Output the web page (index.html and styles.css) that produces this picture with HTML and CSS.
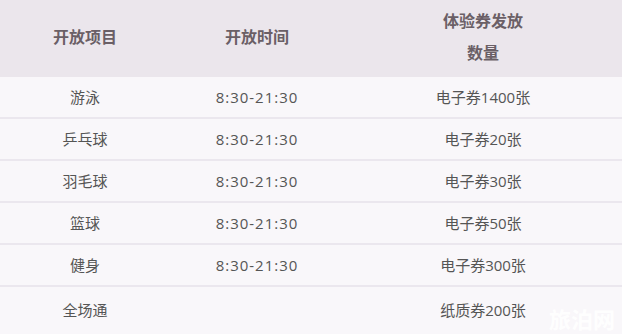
FILE: index.html
```html
<!DOCTYPE html>
<html lang="zh">
<head>
<meta charset="utf-8">
<link rel="stylesheet" href="styles.css">
</head>
<body>
<div class="wrap">
<table class="tbl">
  <colgroup><col class="c1"><col class="c2"><col class="c3"></colgroup>
  <thead>
    <tr><th>开放项目</th><th>开放时间</th><th>体验券发放<br>数量</th></tr>
  </thead>
  <tbody>
    <tr><td>游泳</td><td class="num">8:30-21:30</td><td>电子券1400张</td></tr>
    <tr><td>乒乓球</td><td class="num">8:30-21:30</td><td>电子券20张</td></tr>
    <tr><td>羽毛球</td><td class="num">8:30-21:30</td><td>电子券30张</td></tr>
    <tr><td>篮球</td><td class="num">8:30-21:30</td><td>电子券50张</td></tr>
    <tr><td>健身</td><td class="num">8:30-21:30</td><td>电子券300张</td></tr>
    <tr class="last"><td>全场通</td><td class="num"></td><td>纸质券200张</td></tr>
  </tbody>
</table>
<div class="mark">旅泊网</div>
</div>
</body>
</html>
```
FILE: styles.css
```css
html, body { margin: 0; padding: 0; }
body {
  width: 622px;
  height: 334px;
  overflow: hidden;
  background: #f9f7fa;
  font-family: "Open Sans", "Noto Sans CJK SC", sans-serif;
}
.wrap { position: relative; width: 622px; height: 334px; }
.tbl {
  width: 622px;
  border-collapse: collapse;
  table-layout: fixed;
}
.c1 { width: 170px; }
.c2 { width: 174px; }
.c3 { width: 278px; }
.tbl th {
  height: 72px;
  padding: 0 0 5px;
  background: #ebe6ec;
  color: #6a5f66;
  font-family: "Noto Sans CJK SC", sans-serif;
  font-size: 16px;
  font-weight: bold;
  line-height: 32px;
  text-align: center;
  vertical-align: middle;
}
.tbl td {
  height: 40px;
  padding: 0;
  border-bottom: 2px solid #ebe7ee;
  color: #555555;
  font-size: 15px;
  line-height: 22px;
  text-align: center;
  vertical-align: middle;
}
.tbl td.num { letter-spacing: 1px; }
.tbl tr.last td { border-bottom: none; height: 45px; }
.mark {
  position: absolute;
  right: 7px;
  bottom: 5px;
  color: rgba(255, 255, 255, 0.95);
  font-family: "Noto Sans CJK SC", sans-serif;
  font-size: 22px;
  line-height: 22px;
  font-weight: bold;
}
```
